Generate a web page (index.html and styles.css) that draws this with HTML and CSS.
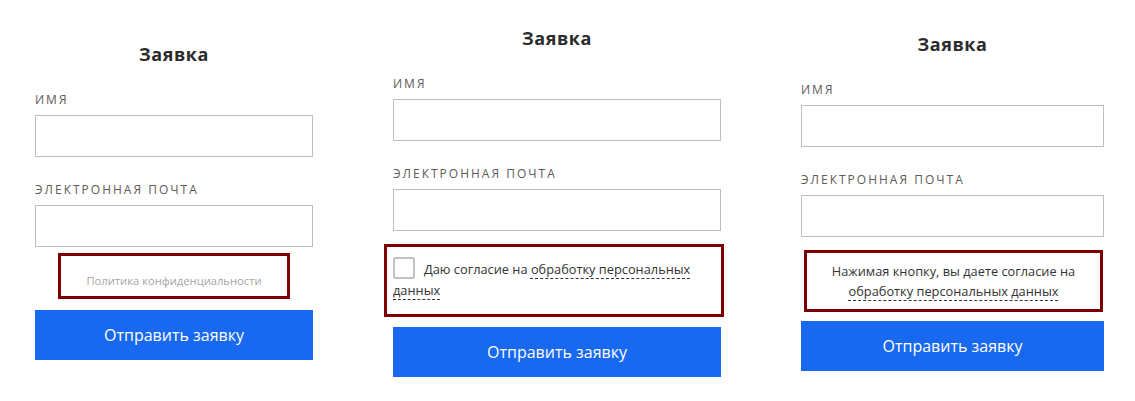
FILE: index.html
```html
<!DOCTYPE html>
<html lang="ru">
<head>
<meta charset="utf-8">
<link rel="stylesheet" href="styles.css">
</head>
<body>
<div class="row">
  <form class="form form-1">
    <h2 class="title">Заявка</h2>
    <div class="field">
      <label class="label">Имя</label>
      <div class="input"></div>
    </div>
    <div class="field">
      <label class="label">Электронная почта</label>
      <div class="input"></div>
    </div>
    <div class="mark mark-policy">
      <span class="policy">Политика конфиденциальности</span>
    </div>
    <div class="btn">Отправить заявку</div>
  </form>

  <form class="form form-2">
    <h2 class="title">Заявка</h2>
    <div class="field">
      <label class="label">Имя</label>
      <div class="input"></div>
    </div>
    <div class="field">
      <label class="label">Электронная почта</label>
      <div class="input"></div>
    </div>
    <div class="mark mark-check">
      <p class="consent"><span class="checkbox"></span>Даю согласие на <span class="link">обработку персональных данных</span></p>
    </div>
    <div class="btn">Отправить заявку</div>
  </form>

  <form class="form form-3">
    <h2 class="title">Заявка</h2>
    <div class="field">
      <label class="label">Имя</label>
      <div class="input"></div>
    </div>
    <div class="field">
      <label class="label">Электронная почта</label>
      <div class="input"></div>
    </div>
    <div class="mark mark-note">
      <p class="consent center">Нажимая кнопку, вы даете согласие на<br><span class="link">обработку персональных данных</span></p>
    </div>
    <div class="btn">Отправить заявку</div>
  </form>
</div>
</body>
</html>
```

FILE: styles.css
```css
* { box-sizing: border-box; }
html, body { margin: 0; padding: 0; background: #fff; }
body { font-family: "Open Sans", "Liberation Sans", sans-serif; color: #333; }

.row {
  display: flex;
  align-items: flex-start;
  gap: 80px;
  padding-left: 35px;
}

.form { display: flex; flex-direction: column; margin: 0; }
.form-1 { width: 278px; margin-top: 42px; }
.form-2 { width: 328px; margin-top: 26px; }
.form-3 { width: 303px; margin-top: 32px; }

.title {
  margin: 0 0 26px;
  font-family: "Open Sans", sans-serif;
  font-weight: 700;
  font-size: 18px;
  line-height: 24px;
  letter-spacing: 0.6px;
  text-align: center;
  color: #2b2b2b;
}

.field { display: flex; flex-direction: column; }
.field + .field { margin-top: 25px; }

.label {
  display: block;
  font-size: 12px;
  line-height: 16px;
  letter-spacing: 2px;
  text-transform: uppercase;
  color: #5e5a58;
  margin-bottom: 7px;
}

.input {
  height: 42px;
  border: 1px solid #bdbdbd;
  background: #fff;
}

.mark { border: 3px solid #7d0000; }

.mark-policy {
  width: 232px;
  height: 46px;
  align-self: center;
  margin-top: 6px;
  padding-top: 12px;
  text-align: center;
}
.policy { font-size: 11.2px; line-height: 20px; color: #a5a5a5; }

.mark-check {
  margin: 13px -3px 0 -9px;
  height: 73px;
  padding: 10px 6px 0 6px;
}
.mark-note {
  margin: 13px 1px 0 3px;
  height: 62px;
  padding: 8px 4px 0;
}

.consent {
  margin: 0;
  font-size: 12.8px;
  line-height: 21px;
  color: #333;
}
.consent.center { text-align: center; line-height: 20px; }

.checkbox {
  display: inline-block;
  width: 22px;
  height: 22px;
  border: 2px solid #c2c2c2;
  border-radius: 2px;
  vertical-align: -5px;
  margin-right: 9px;
}

.link {
  text-decoration: underline dashed #333;
  text-decoration-thickness: 1px;
  text-underline-offset: 4px;
}

.btn {
  height: 50px;
  background: #1868f0;
  color: #fff;
  font-size: 16px;
  display: flex;
  align-items: center;
  justify-content: center;
}
.form-1 .btn { margin-top: 11px; }
.form-2 .btn { margin-top: 10px; }
.form-3 .btn { margin-top: 9px; }
```
